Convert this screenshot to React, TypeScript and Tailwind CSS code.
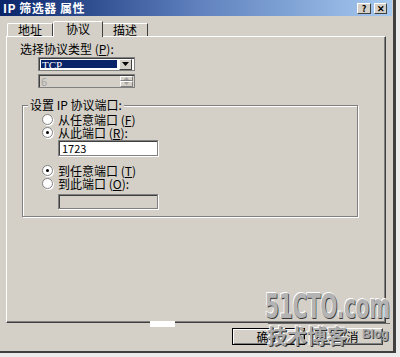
import React from 'react';

const font = "font-['SimSun','Noto_Sans_CJK_SC',sans-serif]";

function Radio({ checked }: { checked?: boolean }) {
  return (
    <span className="relative w-[11px] h-[11px] rounded-full bg-white border border-[#808080] shadow-[1px_1px_0_#fff] flex items-center justify-center shrink-0">
      {checked && <span className="w-[3px] h-[3px] rounded-full bg-black" />}
    </span>
  );
}

function RadioRow({ label, k, rest, checked }: { label: string; k: string; rest: string; checked?: boolean }) {
  return (
    <div className="flex items-center h-[13px] ml-[19px] gap-[5px]">
      <Radio checked={checked} />
      <span className="text-[12px] leading-[12px] text-black whitespace-nowrap">
        {label} (<u>{k}</u>){rest}
      </span>
    </div>
  );
}

function Button({ label, primary }: { label: string; primary?: boolean }) {
  return (
    <div
      className={`w-[73px] h-[17px] flex items-center justify-center text-[12px] leading-none text-black bg-[#d4d0c8] ${
        primary
          ? 'border border-black shadow-[inset_1px_1px_0_#fff,inset_-1px_-1px_0_#808080]'
          : 'border-t border-l border-white border-r border-b border-r-[#404040] border-b-[#404040] shadow-[inset_-1px_-1px_0_#808080]'
      }`}
    >
      {label}
    </div>
  );
}

export default function App() {
  return (
    <div className={`relative w-[400px] h-[357px] bg-[#ececec] overflow-hidden ${font}`}>
      <div className="w-[396px] h-[353px] bg-[#d4d0c8] border-r-[3px] border-b-[2px] border-[#404040] flex flex-col">
        {/* title bar */}
        <div className="h-[16px] w-[392px] bg-gradient-to-r from-[#0a246a] via-[#5f80bd] to-[#a6caf0] flex items-center justify-between pl-[3px] pr-[5px]">
          <span className="text-white font-bold text-[12px] leading-none tracking-[0.5px]">IP 筛选器 属性</span>
          <div className="flex gap-[3px]">
            <div className="w-[14px] h-[11px] bg-[#d4d0c8] border-t border-l border-white border-r border-b border-r-[#404040] border-b-[#404040] flex items-center justify-center text-[9px] font-bold leading-none text-black">?</div>
            <div className="w-[13px] h-[11px] bg-[#d4d0c8] border-t border-l border-white border-r border-b border-r-[#404040] border-b-[#404040] flex items-center justify-center text-[9px] font-bold leading-none text-black">✕</div>
          </div>
        </div>

        {/* tabs */}
        <div className="h-[20px] pl-[7px] flex items-end">
          <div className="w-[46px] h-[13px] border-t border-l border-white border-r border-r-[#404040] rounded-tl-[2px] flex items-center justify-center text-[12px] leading-none">地址</div>
          <div className="w-[50px] h-[16px] -mb-[1px] bg-[#d4d0c8] relative z-10 border-t border-l border-white border-r border-r-[#404040] rounded-tl-[2px] flex items-start pt-[1px] justify-center text-[12px] leading-none">协议</div>
          <div className="w-[45px] h-[13px] border-t border-white border-r border-r-[#404040] flex items-center justify-center text-[12px] leading-none">描述</div>
        </div>

        {/* panel */}
        <div className="ml-[6px] w-[380px] h-[287px] border-t border-l border-white border-r border-b border-r-[#404040] border-b-[#404040] shadow-[inset_-1px_-1px_0_#808080] flex flex-col">
          <div className="mt-[5px] ml-[13px] h-[14px] text-[12px] leading-[14px]">
            选择协议类型 (<u>P</u>):
          </div>
          <div className="mt-[1px] ml-[31px] w-[97px] h-[14px] bg-white border border-[#808080] shadow-[inset_1px_1px_0_#404040] flex items-center p-[2px] gap-[2px]">
            <div className="flex-1 h-full bg-[#0a246a] text-white text-[11px] leading-[10px] font-['Liberation_Serif',serif] px-[1px]">TCP</div>
            <div className="w-[13px] h-[11px] bg-[#d4d0c8] border-t border-l border-white border-r border-b border-r-[#404040] border-b-[#404040] flex items-center justify-center">
              <svg width="7" height="4" viewBox="0 0 7 4"><path d="M0 0h7L3.5 4z" fill="#000" /></svg>
            </div>
          </div>
          <div className="mt-[3px] ml-[31px] w-[97px] h-[14px] bg-[#d4d0c8] border border-[#808080] shadow-[inset_1px_1px_0_#404040] flex items-center pl-[2px]">
            <span className="flex-1 text-[11px] leading-none text-[#a0a0a0]">6</span>
            <div className="w-[13px] h-[11px] flex flex-col mr-[1px]">
              <div className="flex-1 border-t border-l border-white border-r border-b border-r-[#808080] border-b-[#808080] flex items-center justify-center">
                <svg width="5" height="3" viewBox="0 0 5 3"><path d="M0 3h5L2.5 0z" fill="#a0a0a0" /></svg>
              </div>
              <div className="flex-1 border-t border-l border-white border-r border-b border-r-[#808080] border-b-[#808080] flex items-center justify-center">
                <svg width="5" height="3" viewBox="0 0 5 3"><path d="M0 0h5L2.5 3z" fill="#a0a0a0" /></svg>
              </div>
            </div>
          </div>

          {/* group box */}
          <div className="relative mt-[17px] ml-[15px] w-[336px] h-[112px] border border-[#808080] shadow-[1px_1px_0_#fff,inset_1px_1px_0_#fff] flex flex-col">
            <span className="absolute -top-[8px] left-[5px] bg-[#d4d0c8] px-[2px] text-[12px] leading-[14px] whitespace-nowrap">
              设置 IP 协议端口:
            </span>
            <div className="mt-[7px]" />
            <RadioRow label="从任意端口" k="F" rest="" />
            <RadioRow label="从此端口" k="R" rest=":" checked />
            <div className="mt-[1px] ml-[35px] w-[100px] h-[16px] bg-white border border-[#808080] shadow-[inset_1px_1px_0_#404040,1px_1px_0_#fff] flex items-center px-[3px] text-[11px] leading-none">
              1723
            </div>
            <div className="mt-[8px]" />
            <RadioRow label="到任意端口" k="T" rest="" checked />
            <RadioRow label="到此端口" k="O" rest=":" />
            <div className="mt-[4px] ml-[35px] w-[100px] h-[15px] bg-[#d4d0c8] border border-[#808080] shadow-[inset_1px_1px_0_#404040,1px_1px_0_#fff]" />
          </div>
        </div>

        {/* buttons */}
        <div className="mt-[5px] pr-[10px] flex justify-end gap-[5px]">
          <Button label="确定" primary />
          <Button label="取消" />
        </div>
      </div>

      {/* stray white mark on panel edge */}
      <div className="absolute left-[150px] top-[321px] w-[25px] h-[6px] bg-white" />

      {/* watermark */}
      <div className="absolute left-[265px] top-[290px] pointer-events-none">
        <div className="font-['DejaVu_Sans_Condensed',sans-serif] font-bold text-[33px] leading-none text-[#b4b4b4] origin-left scale-x-[0.68] tracking-[-0.5px] [text-shadow:1px_1px_0_#3a3a3a,-1px_-1px_0_#fff]">
          51CTO.com
        </div>
      </div>
      <div className="absolute left-[268px] top-[323px] w-[122px] h-[1px] bg-[#6a6a6a]" />
      <div className="absolute left-[267px] top-[326px] pointer-events-none font-['Noto_Sans_CJK_SC',sans-serif] font-bold text-[20px] leading-none text-[#ababab] [text-shadow:1px_1px_0_#333,-1px_-1px_0_#fff]">
        技术博客
      </div>
      <div className="absolute left-[362px] top-[328px] pointer-events-none font-['Liberation_Sans',sans-serif] font-bold text-[12px] leading-none text-[#a8a8a8] [text-shadow:1px_1px_0_#444]">
        Blog
      </div>
    </div>
  );
}
